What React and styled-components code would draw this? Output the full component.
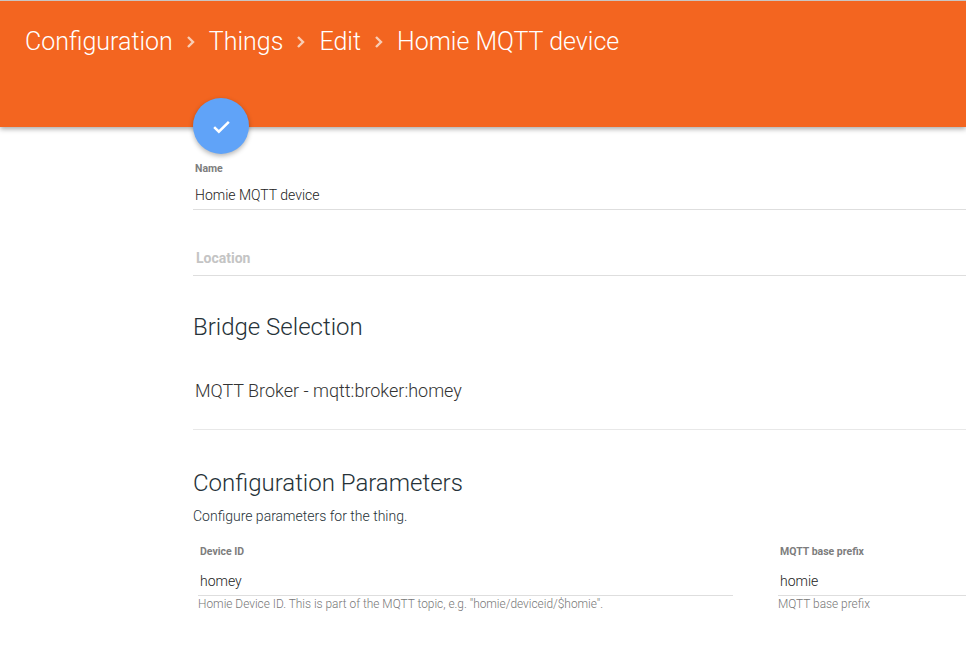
import React from "react";
import styled, { createGlobalStyle } from "styled-components";

const GlobalStyle = createGlobalStyle`
  html, body {
    margin: 0;
    padding: 0;
    background: #fff;
    overflow: hidden;
    font-family: Roboto, "Liberation Sans", sans-serif;
  }
`;

const Page = styled.div`
  width: 966px;
  height: 650px;
  overflow: hidden;
`;

const Header = styled.header`
  height: 127px;
  box-sizing: border-box;
  padding: 25px 0 0 25px;
  background: #f36520;
  border-top: 1px solid #c9c5c2;
  box-shadow: 0 2px 5px rgba(0, 0, 0, 0.35);
`;

const Breadcrumbs = styled.div`
  display: flex;
  align-items: center;
  height: 30px;
  color: #fff;
  font-size: 25px;
  font-weight: 300;
`;

const Chevron = styled.svg`
  width: 10px;
  height: 14px;
  margin: 2px 13px 0 13px;
  fill: none;
  stroke: #f8cdb6;
  stroke-width: 2.4;
`;

const Content = styled.main`
  position: relative;
  padding-left: 193px;
`;

const Fab = styled.button`
  display: flex;
  align-items: center;
  justify-content: center;
  width: 56px;
  height: 56px;
  margin-top: -29px;
  padding: 0;
  border: none;
  border-radius: 50%;
  background: #60a3f8;
  box-shadow: 0 2px 5px rgba(0, 0, 0, 0.3);
  svg {
    width: 21px;
    height: 21px;
    fill: none;
    stroke: #fff;
    stroke-width: 2.4;
  }
`;

const NameField = styled.div`
  height: 56px;
  box-sizing: border-box;
  padding: 8px 0 0 2px;
  border-bottom: 1px solid #dedede;
`;

const SmallLabel = styled.div`
  height: 14px;
  line-height: 14px;
  font-size: 10.5px;
  font-weight: 700;
  color: #7d7d7d;
`;

const Value = styled.div`
  margin-top: 10px;
  height: 18px;
  line-height: 18px;
  font-size: 14px;
  font-weight: 300;
  color: #222;
`;

const LocationField = styled.div`
  height: 66px;
  box-sizing: border-box;
  padding: 39px 0 0 3px;
  border-bottom: 1px solid #dedede;
  font-size: 14px;
  line-height: 18px;
  font-weight: 700;
  color: #c4c4c4;
`;

const SectionTitle = styled.h2`
  margin: ${(p) => p.$top}px 0 0;
  height: 30px;
  line-height: 30px;
  font-size: 24px;
  font-weight: 300;
  color: #263238;
`;

const BridgeRow = styled.div`
  height: 88px;
  box-sizing: border-box;
  padding: 38px 0 0 2px;
  border-bottom: 1px solid #e8e8e8;
  font-size: 18px;
  line-height: 22px;
  font-weight: 300;
  color: #333;
`;

const Description = styled.p`
  margin: 10px 0 0;
  height: 16px;
  line-height: 16px;
  font-size: 14px;
  font-weight: 300;
  color: #263238;
`;

const ParamGrid = styled.div`
  display: grid;
  grid-template-columns: 535px 535px;
  column-gap: 45px;
  margin: 21px 0 0 5px;
`;

const ParamLabel = styled(SmallLabel)`
  padding-left: 2px;
`;

const ParamInput = styled.div`
  height: 37px;
  box-sizing: border-box;
  padding: 13px 0 0 2px;
  border-bottom: 1px solid #dedede;
  font-size: 14px;
  font-weight: 300;
  line-height: 18px;
  color: #222;
`;

const Help = styled.div`
  margin-top: 1px;
  font-size: 11.9px;
  font-weight: 300;
  line-height: 15px;
  color: #777;
  white-space: nowrap;
`;

const crumbs = ["Configuration", "Things", "Edit", "Homie MQTT device"];

const params = [
  {
    label: "Device ID",
    value: "homey",
    help: 'Homie Device ID. This is part of the MQTT topic, e.g. "homie/deviceid/$homie".',
  },
  { label: "MQTT base prefix", value: "homie", help: "MQTT base prefix" },
];

export default function App() {
  return (
    <Page>
      <GlobalStyle />
      <Header>
        <Breadcrumbs>
          {crumbs.map((crumb, idx) => (
            <React.Fragment key={crumb}>
              {idx > 0 && (
                <Chevron viewBox="0 0 10 14">
                  <path d="M2 2l5 5-5 5" />
                </Chevron>
              )}
              <span>{crumb}</span>
            </React.Fragment>
          ))}
        </Breadcrumbs>
      </Header>
      <Content>
        <Fab aria-label="Save">
          <svg viewBox="0 0 20 20">
            <path d="M3 10.5l4.5 4.5L17 5.5" />
          </svg>
        </Fab>
        <NameField>
          <SmallLabel>Name</SmallLabel>
          <Value>Homie MQTT device</Value>
        </NameField>
        <LocationField>Location</LocationField>
        <SectionTitle $top={36}>Bridge Selection</SectionTitle>
        <BridgeRow>MQTT Broker - mqtt:broker:homey</BridgeRow>
        <SectionTitle $top={38}>Configuration Parameters</SectionTitle>
        <Description>Configure parameters for the thing.</Description>
        <ParamGrid>
          {params.map((param) => (
            <div key={param.label}>
              <ParamLabel>{param.label}</ParamLabel>
              <ParamInput>{param.value}</ParamInput>
              <Help>{param.help}</Help>
            </div>
          ))}
        </ParamGrid>
      </Content>
    </Page>
  );
}
